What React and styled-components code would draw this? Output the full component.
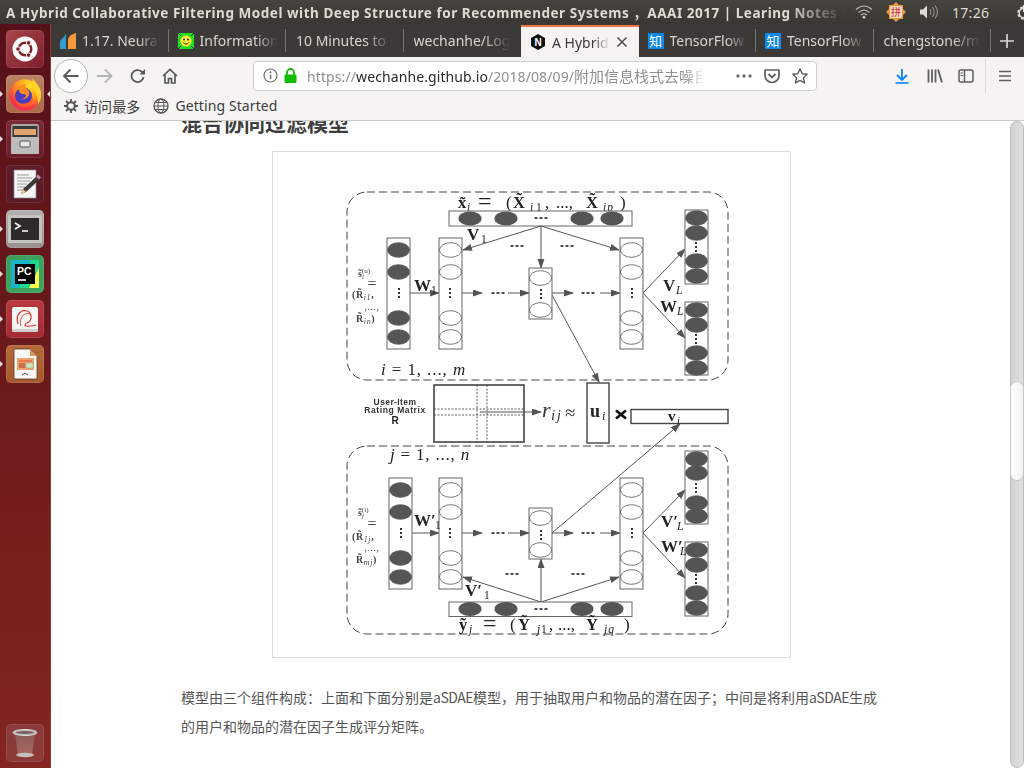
import React from "react";
import styled, { createGlobalStyle } from "styled-components";

const UI_FONT = `"Noto Sans", "Noto Sans CJK SC", sans-serif`;

const GlobalStyle = createGlobalStyle`
  html, body {
    margin: 0;
    padding: 0;
    width: 1024px;
    height: 768px;
    overflow: hidden;
    background: #fff;
  }
`;

const Desktop = styled.div`
  width: 1024px;
  height: 768px;
  display: flex;
  flex-direction: column;
  overflow: hidden;
  font-family: ${UI_FONT};
`;

// top panel
const TopPanel = styled.div`
  height: 24px;
  flex: none;
  display: flex;
  align-items: center;
  background: linear-gradient(#45443f, #393833);
  color: #dfdbd2;
`;
const WindowTitle = styled.div`
  width: 840px;
  flex: none;
  margin-left: 6px;
  font-size: 13.5px;
  font-weight: 700;
  letter-spacing: 0.53px;
  white-space: nowrap;
  overflow: hidden;
  mask-image: linear-gradient(to right, #000 93%, transparent 100%);
`;
const Indicators = styled.div`
  display: flex;
  align-items: center;
  flex: none;
  margin-left: 9px;
  gap: 13px;
`;
const Clock = styled.span`
  font-size: 14px;
  letter-spacing: 0.3px;
  margin: 0 13px 0 1px;
  color: #dfdbd2;
`;

const Body = styled.div`
  flex: 1;
  display: flex;
  min-height: 0;
`;

// launcher
const Launcher = styled.div`
  width: 51px;
  flex: none;
  display: flex;
  flex-direction: column;
  align-items: flex-start;
  gap: 7px;
  padding: 6px 0 6px 6px;
  box-sizing: border-box;
  background: linear-gradient(#57101a, #83261f);
  border-right: 1px solid #8e3a30;
`;
const Tile = styled.div`
  position: relative;
  width: 38px;
  height: 38px;
  border-radius: 5px;
  background: ${(p) => p.$bg};
  box-shadow: inset 0 0 0 1px rgba(255, 255, 255, 0.1);
  display: flex;
  align-items: center;
  justify-content: center;
  ${(p) => p.$trash && "margin-top: auto;"}
`;
const PipLeft = styled.span`
  position: absolute;
  left: -6px;
  top: 16px;
  width: 0;
  height: 0;
  border-left: 3px solid #ddd;
  border-top: 3px solid transparent;
  border-bottom: 3px solid transparent;
`;
const PipRight = styled.span`
  position: absolute;
  right: -6px;
  top: 16px;
  width: 0;
  height: 0;
  border-right: 3px solid #ddd;
  border-top: 3px solid transparent;
  border-bottom: 3px solid transparent;
`;

// browser
const Browser = styled.div`
  flex: 1;
  display: flex;
  flex-direction: column;
  min-width: 0;
`;
const TabStrip = styled.div`
  height: 33px;
  flex: none;
  display: flex;
  background: #3b3a36;
`;
const Tab = styled.div`
  width: 117.5px;
  flex: none;
  box-sizing: border-box;
  display: flex;
  align-items: center;
  gap: 6px;
  padding-left: ${(p) => (p.$noIcon ? "10px" : "9px")};
  position: relative;
  font-size: 14px;
  color: ${(p) => (p.$active ? "#3b3a36" : "#d8d6d0")};
  background: ${(p) => (p.$active ? "#f5f4f3" : "transparent")};
  border-top: ${(p) => (p.$active ? "2px solid #f0764a" : "none")};
  margin-top: ${(p) => (p.$active ? "1px" : "0")};

  &::after {
    content: "";
    display: ${(p) => (p.$sep ? "block" : "none")};
    position: absolute;
    right: 0;
    top: 5px;
    bottom: 5px;
    width: 1px;
    background: #75746f;
  }
`;
const TabLabel = styled.span`
  white-space: nowrap;
  overflow: hidden;
  width: ${(p) => p.$w}px;
  mask-image: linear-gradient(to right, #000 72%, transparent 100%);
`;
const TabClose = styled.span`
  display: flex;
`;
const ZhihuIcon = styled.span`
  width: 16px;
  height: 16px;
  flex: none;
  background: #0f88eb;
  color: #fff;
  font-size: 13px;
  line-height: 16px;
  text-align: center;
  font-family: "Noto Sans CJK SC", sans-serif;
`;
const NewTab = styled.div`
  flex: 1;
  display: flex;
  align-items: center;
  justify-content: center;
  padding-right: 1px;
`;

const NavBar = styled.div`
  height: 37px;
  flex: none;
  display: flex;
  align-items: center;
  background: #f5f4f3;
  position: relative;
`;
const BackButton = styled.div`
  width: 32px;
  height: 32px;
  margin-left: 3px;
  border-radius: 50%;
  background: #fff;
  border: 1px solid #b3b3b1;
  display: flex;
  align-items: center;
  justify-content: center;
  flex: none;
`;
const NavIcon = styled.div`
  display: flex;
  flex: none;
  margin-left: ${(p) => p.$ml}px;
`;
const UrlBar = styled.div`
  width: 564px;
  height: 30px;
  box-sizing: border-box;
  margin-left: 75px;
  flex: none;
  display: flex;
  align-items: center;
  background: #fff;
  border: 1px solid #cfcfcd;
  border-radius: 4px;
  padding-left: 9px;
  font-size: 14px;
  color: #8f8f8d;
`;
const UrlText = styled.div`
  width: 398px;
  margin-left: 10px;
  white-space: nowrap;
  overflow: hidden;
  letter-spacing: 0.1px;
  mask-image: linear-gradient(to right, #000 95%, transparent 100%);

  b {
    font-weight: 400;
    color: #2b2b2b;
  }
`;
const UrlCjk = styled.span`
  font-size: 15px;
  letter-spacing: 0;
`;
const ToolbarSep = styled.div`
  width: 1px;
  height: 34px;
  background: #dcdcda;
  margin-left: 11px;
  flex: none;
`;

const BookmarkBar = styled.div`
  height: 27px;
  flex: none;
  box-sizing: border-box;
  display: flex;
  align-items: center;
  padding: 0 0 3px 13px;
  background: #f5f4f3;
  border-bottom: 1px solid #c9c9c7;
  font-size: 14px;
  letter-spacing: 0.1px;
  color: #3d3d3b;
`;
const Bookmark = styled.div`
  display: flex;
  align-items: center;
  gap: 6px;
  margin-right: 13px;
`;

// page
const Viewport = styled.div`
  flex: 1;
  display: flex;
  min-height: 0;
  overflow: hidden;
  background: #fff;
`;
const Page = styled.div`
  flex: 1;
  min-width: 0;
`;
const Article = styled.article`
  width: 700px;
  margin: -14px 0 0 130px;
  color: #555;
  font-family: "Noto Sans CJK SC", sans-serif;
`;
const Heading = styled.h2`
  margin: 0 0 14px;
  font-size: 21px;
  line-height: 30px;
  font-weight: 700;
  color: #3d3d3d;
`;
const Figure = styled.figure`
  margin: 0 0 0 91px;
  width: 519px;
  height: 507px;
  box-sizing: border-box;
  border: 1px solid #ddd;
  background: #fff;
`;
const Paragraph = styled.p`
  margin: 25px 0 0;
  font-size: 14px;
  line-height: 29px;
  color: #555;
`;
const Latin = styled.span`
  letter-spacing: -0.5px;
`;
const ScrollTrack = styled.div`
  width: 14px;
  flex: none;
  position: relative;
  box-sizing: border-box;
  background: linear-gradient(to right, #d2d2d0, #e0e0de);
  border: 1px solid #bdbdbb;
  border-radius: 7px;
`;
const ScrollThumb = styled.div`
  position: absolute;
  left: 0;
  right: 0;
  top: 260px;
  height: 98px;
  border-radius: 6px;
  background: linear-gradient(to right, #fff, #f1f1ef);
  box-shadow: 0 0 0 1px #c8c8c6;
`;
const DiagramSvg = styled.svg`
  display: block;
  width: 517px;
  height: 505px;
  filter: blur(0.5px);
`;

// -- icons --
const Svg = ({ s = 16, w, h, children }) => (
  <svg width={w || s} height={h || s} viewBox={`0 0 ${w || s} ${h || s}`} fill="none">
    {children}
  </svg>
);

const UbuntuLogo = () => (
  <Svg s={26}>
    <circle cx="13" cy="13" r="12.5" fill="#fff" />
    <circle cx="13" cy="13" r="6.3" stroke="#7d2028" strokeWidth="2.4" />
    <circle cx="6" cy="13" r="2.3" fill="#7d2028" stroke="#fff" />
    <circle cx="16.6" cy="6.9" r="2.3" fill="#7d2028" stroke="#fff" />
    <circle cx="16.6" cy="19.1" r="2.3" fill="#7d2028" stroke="#fff" />
  </Svg>
);

const FirefoxLogo = () => (
  <Svg s={34}>
    <defs>
      <radialGradient id="ffBody" cx="0.65" cy="0.2" r="0.95">
        <stop offset="0" stopColor="#ffe226" />
        <stop offset="0.42" stopColor="#ff9a1f" />
        <stop offset="0.74" stopColor="#f9363f" />
        <stop offset="1" stopColor="#e0267e" />
      </radialGradient>
    </defs>
    <circle cx="17" cy="18" r="15.8" fill="url(#ffBody)" />
    <path d="M24 1c3 4 9 8 9 17 0 4-1 7-3 9 0-7-2-13-6-17 1-3 1-6 0-9z" fill="#ffd426" />
    <circle cx="15.5" cy="19" r="8.5" fill="#4a3bc0" />
    <path d="M9 11c2-3 6-4 9-4-1 2-1 3 1 5 2 1 3 3 2 6-1 3-5 5-8 4 3 0 5-2 5-4 0-1-2-1-4-1-2-1-3-2-3-4z" fill="#ff8a1f" />
    <path d="M7 22c3 5 9 6 14 3 2-1 4-4 4-7 1 6-3 12-9 12-5 0-8-3-9-8z" fill="#ff5a24" />
  </Svg>
);

const FilesIcon = () => (
  <Svg s={32}>
    <rect x="2" y="1" width="28" height="30" rx="2.5" fill="#a9a8a4" />
    <rect x="3.5" y="3" width="25" height="11" fill="#3a3a38" />
    <rect x="5" y="6" width="22" height="6" fill="#e0a56c" />
    <rect x="2" y="14" width="28" height="17" rx="1" fill="#bdbcb8" />
    <rect x="11" y="18" width="10" height="6" rx="1" fill="#e8e8e5" stroke="#555" />
  </Svg>
);

const EditorIcon = () => (
  <Svg s={32}>
    <rect x="5" y="2" width="22" height="28" fill="#f6f6f4" stroke="#8b8b87" strokeWidth="0.7" />
    <path d="M8 7h12M8 10h15M8 13h13M8 16h10M8 19h8M8 22h7" stroke="#9b9b97" />
    <path d="M28 8l3 3-14 13-5 2 2-5z" fill="#3b3b3a" />
    <path d="M27 8.500l2-2 3 3-2 2z" fill="#d384a8" />
    <path d="M12 26l2-5 3 3z" fill="#e8c98f" />
  </Svg>
);

const TerminalIcon = () => (
  <Svg s={34}>
    <rect x="0" y="3" width="34" height="28" rx="1" fill="#c4c3bf" />
    <rect x="3" y="6" width="28" height="22" fill="#2c2b2a" />
    <path d="M7 11l5 3-5 3" stroke="#f2f2f2" strokeWidth="1.6" />
    <path d="M14 19h6" stroke="#f2f2f2" strokeWidth="1.6" />
  </Svg>
);

const PyCharmLogo = () => (
  <Svg s={30}>
    <rect x="1" y="1" width="28" height="28" fill="#21d789" />
    <path d="M1 1h20L9 29H1z" fill="#17b6c9" />
    <path d="M29 29V9L19 29z" fill="#fcf84a" />
    <rect x="5" y="5" width="20" height="20" fill="#000" />
    <path d="M8 21h8" stroke="#fff" strokeWidth="1.6" />
    <text x="7" y="16" fill="#fff" fontSize="10.5" fontWeight="700" fontFamily="Liberation Sans, sans-serif">PC</text>
  </Svg>
);

const PdfIcon = () => (
  <Svg s={30}>
    <rect x="2" y="3" width="26" height="25" rx="2" fill="#f5f5f3" />
    <path d="M8 20C5 10 12 5 17 7c6 2 5 10 0 12-3 1-3 4 3 3 4 0 6-1 6-1" stroke="#d83a32" strokeWidth="1.2" />
    <path d="M11 22C8 13 15 8 20 10" stroke="#d83a32" strokeWidth="0.9" />
    <path d="M2 25h26v1a2 2 0 0 1-2 2H4a2 2 0 0 1-2-2z" fill="#cfcfcc" />
  </Svg>
);

const ImpressIcon = () => (
  <Svg s={32}>
    <path d="M5 1h16l7 7v23H5z" fill="#f7f7f5" stroke="#5b3a26" strokeWidth="0.8" />
    <path d="M21 1l7 7h-7z" fill="#d99562" />
    <rect x="8" y="10" width="17" height="12" fill="#ef9f72" />
    <path d="M10 13h13" stroke="#e2542c" />
    <rect x="10" y="15" width="6" height="5" fill="#c9704a" />
    <rect x="17" y="15" width="7" height="5" fill="#cbe5c5" stroke="#7aa774" strokeWidth="0.5" />
    <path d="M13 27l3-2 3 2" stroke="#555" />
  </Svg>
);

const TrashIcon = () => (
  <Svg s={32}>
    <defs>
      <linearGradient id="binBody" x1="0" x2="0" y1="0" y2="1">
        <stop offset="0" stopColor="#8a5a58" />
        <stop offset="1" stopColor="#a86a66" />
      </linearGradient>
    </defs>
    <path d="M6 6l3 22h14l3-22z" fill="url(#binBody)" />
    <ellipse cx="16" cy="5.5" rx="12" ry="3" fill="#b9b7b4" stroke="#dedcd9" />
    <ellipse cx="16" cy="5.5" rx="9" ry="1.5" fill="#77605e" />
    <ellipse cx="16" cy="28" rx="9" ry="2.2" fill="#c3c1be" />
  </Svg>
);

const Wifi = () => (
  <Svg w={18} h={14}>
    <path d="M1 4.500c5-4.500 11-4.500 16 0M3.500 7.500c3.500-3 7.500-3 11 0M6 10c2-1.600 4-1.600 6 0" stroke="#b9b6ae" strokeWidth="1.2" />
    <circle cx="9" cy="12.300" r="1.300" fill="#dfdbd2" />
  </Svg>
);
const PinyinIcon = () => (
  <Svg s={20}>
    <path d="M10 0l3 3h4v4l3 3-3 3v4h-4l-3 3-3-3H3v-4l-3-3 3-3V3h4z" fill="#e99a45" />
    <rect x="4" y="4" width="12" height="12" rx="2" fill="#f4d9c2" />
    <text x="10" y="14" fontSize="10" textAnchor="middle" fill="#c92a2a" fontFamily="Noto Sans CJK SC, sans-serif">拼</text>
  </Svg>
);
const Volume = () => (
  <Svg w={19} h={16}>
    <path d="M1 5.500h3l4-4v13l-4-4H1z" fill="#dfdbd2" />
    <path d="M11 5c1 2 1 4 0 6M13.500 3c2 3 2 7 0 10M16 1.500c3 4 3 9 0 13" stroke="#8f8c85" strokeWidth="1.2" />
  </Svg>
);
const Power = () => (
  <Svg s={18}>
    <circle cx="9" cy="10" r="5.600" stroke="#dfdbd2" strokeWidth="2.400" strokeDasharray="2.600 1.800" />
    <circle cx="9" cy="10" r="4.800" stroke="#dfdbd2" strokeWidth="1.400" />
    <path d="M9 2v7" stroke="#dfdbd2" strokeWidth="2" />
  </Svg>
);

const SklearnIcon = () => (
  <Svg s={16}>
    <path d="M0 8c3-4 5-4 6-8v16H0z" fill="#3499cd" />
    <path d="M8 16V6c1-3 4-5 8-6v16z" fill="#f89939" />
  </Svg>
);
const SmileyIcon = () => (
  <Svg s={16}>
    <rect width="16" height="16" fill="#1fe01f" />
    <circle cx="8" cy="8" r="5.500" fill="#ffe93b" />
    <circle cx="6" cy="6.500" r="1" fill="#222" />
    <circle cx="10" cy="6.500" r="1" fill="#222" />
    <path d="M5 9.500c1.500 2 4.500 2 6 0" stroke="#222" />
    <path d="M0 0l3 3M16 0l-3 3M0 16l3-3M16 16l-3-3" stroke="#222" />
  </Svg>
);
const NextIcon = () => (
  <Svg s={16}>
    <path d="M8 0l7 4v8l-7 4-7-4V4z" fill="#111" />
    <text x="8" y="11.500" fill="#fff" fontSize="10" fontWeight="700" textAnchor="middle" fontFamily="Liberation Sans, sans-serif">N</text>
  </Svg>
);
const CloseX = () => (
  <Svg s={12}>
    <path d="M1.500 1.500l9 9M10.500 1.500l-9 9" stroke="#4a4a48" strokeWidth="1.500" />
  </Svg>
);
const Plus = () => (
  <Svg s={14}>
    <path d="M7 0v14M0 7h14" stroke="#d8d6d0" strokeWidth="1.700" />
  </Svg>
);

const ArrowLeft = ({ c = "#5a5a58" }) => (
  <Svg s={18}>
    <path d="M16.500 9H2M8.500 2.500L2 9l6.500 6.500" stroke={c} strokeWidth="1.900" />
  </Svg>
);
const ArrowRight = () => (
  <Svg s={18}>
    <path d="M1 9h14.500M9 2.500L15.500 9 9 15.500" stroke="#b4b4b2" strokeWidth="1.800" />
  </Svg>
);
const Reload = () => (
  <Svg s={16}>
    <path d="M13.500 9a6 6 0 1 1-2-5.500L14 5.500" stroke="#5a5a58" strokeWidth="1.800" />
    <path d="M15 1v5.500H9.500z" fill="#5a5a58" />
  </Svg>
);
const HomeIcon = () => (
  <Svg s={16}>
    <path d="M1 8l7-6.500L15 8M3 6.500V15h3.500v-4.500h3V15H13V6.500" stroke="#5a5a58" strokeWidth="1.700" />
  </Svg>
);
const InfoIcon = () => (
  <Svg s={15}>
    <circle cx="7.500" cy="7.500" r="6.500" stroke="#6f6f6d" strokeWidth="1.200" />
    <path d="M7.500 6.500v4.500" stroke="#6f6f6d" strokeWidth="1.500" />
    <circle cx="7.500" cy="4.200" r="1" fill="#6f6f6d" />
  </Svg>
);
const LockIcon = () => (
  <Svg w={13} h={15}>
    <path d="M3 7V4.500a3.500 3.500 0 0 1 7 0V7" stroke="#12bc00" strokeWidth="1.800" />
    <rect x="0.500" y="6.500" width="12" height="8.500" rx="1" fill="#12bc00" />
  </Svg>
);
const PageDots = () => (
  <Svg w={16} h={4}>
    <circle cx="2" cy="2" r="1.700" fill="#6a6a68" />
    <circle cx="8" cy="2" r="1.700" fill="#6a6a68" />
    <circle cx="14" cy="2" r="1.700" fill="#6a6a68" />
  </Svg>
);
const Pocket = () => (
  <Svg s={16}>
    <path d="M1 2h14v5.500a7 7 0 0 1-14 0V2z" stroke="#5f5f5d" strokeWidth="1.700" strokeLinejoin="round" />
    <path d="M4.500 6l3.500 3.500L11.500 6" stroke="#5f5f5d" strokeWidth="1.800" />
  </Svg>
);
const StarIcon = () => (
  <Svg s={16}>
    <path d="M8 1l2.200 4.700 5 .6-3.700 3.500 1 5.100L8 12.400 3.500 14.900l1-5.100L.8 6.300l5-.6z" stroke="#5f5f5d" strokeWidth="1.500" strokeLinejoin="round" />
  </Svg>
);
const DownloadIcon = () => (
  <Svg s={16}>
    <path d="M8 1v10M3 7l5 5 5-5" stroke="#0a84ff" strokeWidth="1.800" />
    <path d="M1.500 15h13" stroke="#0a84ff" strokeWidth="1.600" />
  </Svg>
);
const LibraryIcon = () => (
  <Svg s={16}>
    <path d="M1.500 1.500v13M5 1.500v13M8.500 1.500v13M11 1.500l4 13" stroke="#5f5f5d" strokeWidth="1.800" />
  </Svg>
);
const SidebarIcon = () => (
  <Svg s={16}>
    <rect x="1" y="2" width="14" height="12" rx="2" stroke="#5f5f5d" strokeWidth="1.500" />
    <path d="M6.500 2v12" stroke="#5f5f5d" strokeWidth="1.500" />
    <path d="M2.500 5h2.500M2.500 7.500h2.500" stroke="#5f5f5d" />
  </Svg>
);
const MenuIcon = () => (
  <Svg s={14}>
    <path d="M1 2.500h12M1 7h12M1 11.500h12" stroke="#5f5f5d" strokeWidth="1.600" />
  </Svg>
);
const GearIcon = () => (
  <Svg s={14}>
    <circle cx="7" cy="7" r="3.800" stroke="#555" strokeWidth="2" />
    <path d="M7 0v3M7 11v3M0 7h3M11 7h3M2 2l2 2M10 10l2 2M12 2l-2 2M4 10l-2 2" stroke="#555" strokeWidth="1.800" />
  </Svg>
);
const GlobeIcon = () => (
  <Svg s={16}>
    <circle cx="8" cy="8" r="7" stroke="#555" strokeWidth="1.300" />
    <ellipse cx="8" cy="8" rx="3" ry="7" stroke="#555" />
    <path d="M1 8h14M2 4.500h12M2 11.500h12" stroke="#555" />
  </Svg>
);

// -- the figure, drawn in page coordinates --
const INK = "#555";
const SERIF = `"Liberation Serif", serif`;
const SANS = `"Liberation Sans", sans-serif`;

const Col = ({ x, y, h, cys, filled }) => (
  <g>
    <rect x={x} y={y} width="23" height={h} fill="#fff" stroke="#666" strokeWidth="1" />
    {cys.map((cy) => (
      <ellipse
        key={cy}
        cx={x + 11.5}
        cy={cy}
        rx="11"
        ry="7.300"
        fill={filled ? INK : "#fff"}
        stroke={filled ? INK : "#555"}
        strokeWidth="0.800"
      />
    ))}
  </g>
);
const VDots = ({ x, y }) => (
  <path d={`M${x} ${y - 5}v2M${x} ${y - 1}v2M${x} ${y + 3}v2`} stroke="#112" strokeWidth="1.700" />
);
const HDots = ({ x, y }) => (
  <path d={`M${x - 6.5} ${y}h3M${x - 1.500} ${y}h3M${x + 3.500} ${y}h3`} stroke="#112" strokeWidth="1.700" />
);
const Line = ({ d }) => <path d={d} stroke={INK} strokeWidth="1" fill="none" markerEnd="url(#arr)" />;
const BarEllipses = ({ cy }) =>
  [470, 506, 582, 612].map((cx) => <ellipse key={cx} cx={cx} cy={cy} rx="11.500" ry="7" fill={INK} />);

const Tex = ({ x, y, size = 15, bold, italic, anchor, children, fill = "#222", family = SERIF, spacing }) => (
  <text
    x={x}
    y={y}
    fontSize={size}
    fontFamily={family}
    fontWeight={bold ? 700 : 400}
    fontStyle={italic ? "italic" : "normal"}
    textAnchor={anchor}
    fill={fill}
    letterSpacing={spacing}
  >
    {children}
  </text>
);

// symbol with a subscript placed by hand, the way the figure sets it
const Sym = ({ x, y, name, sub, subX, subItalic = true, size = 17 }) => (
  <g>
    <Tex x={x} y={y} size={size} bold>{name}</Tex>
    <Tex x={subX} y={y + 3} size={size * 0.68} italic={subItalic}>{sub}</Tex>
  </g>
);

const Equation = ({ y, parts }) =>
  parts.map(([x, text, kind], i) => {
    if (kind === "b") return <Tex key={i} x={x} y={y} size={16.5} bold>{text}</Tex>;
    if (kind === "s") return <Tex key={i} x={x} y={y + 3} size={11.5} italic spacing={1}>{text}</Tex>;
    if (kind === "n") return <Tex key={i} x={x} y={y + 3} size={11.5}>{text}</Tex>;
    if (kind === "e") return <Tex key={i} x={x} y={y + 1} size={24}>{text}</Tex>;
    return <Tex key={i} x={x} y={y} size={17}>{text}</Tex>;
  });

const SideLabel = ({ ys, top, sup, first, last }) => (
  <g fill="#333">
    <Tex x={358} y={ys[0]} size={10} bold fill="#444">
      s̃
      <tspan dy="2" fontSize="7" fontStyle="italic" fontWeight="400">{top}</tspan>
      <tspan dy="-6" dx="-2" fontSize="7" fontWeight="400">{sup}</tspan>
    </Tex>
    <Tex x={372} y={ys[1]} size={16} anchor="middle" fill="#444">=</Tex>
    <Tex x={352} y={ys[2]} size={10} bold fill="#444" spacing={0.6}>
      (R̃
      <tspan dy="2" fontSize="8" fontStyle="italic" fontWeight="400">{first}</tspan>
      <tspan dy="-2">,</tspan>
    </Tex>
    <Tex x={372} y={ys[3]} size={10} anchor="middle" fill="#444" spacing={0.5}>,...,</Tex>
    <Tex x={356} y={ys[4]} size={10} bold fill="#444" spacing={0.6}>
      R̃
      <tspan dy="2" fontSize="8" fontStyle="italic" fontWeight="400">{last}</tspan>
      <tspan dy="-2">)</tspan>
    </Tex>
  </g>
);

const Diagram = () => (
  <DiagramSvg viewBox="273 152 517 505">
    <defs>
      <marker id="arr" markerWidth="10" markerHeight="8" refX="9" refY="3.500" orient="auto" markerUnits="userSpaceOnUse">
        <path d="M0 0L10 3.500L0 7z" fill={INK} />
      </marker>
    </defs>

    {/* upper network */}
    <rect x="347" y="192" width="381" height="188" rx="20" fill="none" stroke="#444" strokeWidth="1" strokeDasharray="8 4" />
    <Equation
      y={208}
      parts={[
        [458, "x̃", "b"], [467, "i", "s"], [478, "=", "e"], [506, "("], [513, "X̃", "b"],
        [530, "i", "s"], [536, "1", "n"], [545, ","], [556, "...,"], [586, "X̃", "b"], [603, "ip", "s"], [620, ")"],
      ]}
    />
    <rect x="449" y="211" width="183" height="15" fill="#fff" stroke="#666" />
    <BarEllipses cy={218.500} />
    <HDots x={541} y={218} />

    <Line d="M541 226L463 250" />
    <Line d="M541 226V268" />
    <Line d="M541 226L619 250" />
    <Line d="M410 293H439" />
    <Line d="M461 293H482" />
    <Line d="M508 293H529" />
    <Line d="M552 293H573" />
    <Line d="M600 293H620" />
    <Line d="M643 293L685 249" />
    <Line d="M643 293L685 338" />
    <Line d="M552 295L599 382" />

    <Col x={387} y={238} h={111} cys={[250, 272, 318, 337]} filled />
    <Col x={439} y={238} h={111} cys={[250, 272, 318, 337]} />
    <Col x={529} y={268} h={51} cys={[278, 310]} />
    <Col x={620} y={238} h={111} cys={[250, 272, 318, 337]} />
    <Col x={685} y={210} h={74} cys={[218, 233, 261, 276]} filled />
    <Col x={685} y={302} h={73} cys={[310, 325, 353, 368]} filled />
    <VDots x={399} y={293} />
    <VDots x={450} y={293} />
    <VDots x={541} y={294} />
    <VDots x={632} y={293} />
    <VDots x={696} y={247} />
    <VDots x={696} y={339} />
    <HDots x={498} y={293} />
    <HDots x={588} y={293} />
    <HDots x={517} y={246} />
    <HDots x={567} y={246} />

    <Sym x={467} y={240} name="V" sub="1" subX={481} subItalic={false} />
    <Sym x={414} y={291} name="W" sub="1" subX={431} subItalic={false} />
    <Sym x={663} y={291} name="V" sub="L" subX={676} />
    <Sym x={660} y={312} name="W" sub="L" subX={677} />
    <SideLabel ys={[277, 289, 298, 310, 322]} top="i" sup="(u)" first="i1" last="in" />
    <Tex x={381} y={375} size={17} italic spacing={0.9}>i<tspan fontStyle="normal"> = 1, ..., </tspan>m</Tex>

    {/* rating matrix */}
    <Tex x={395} y={405} size={8.500} bold anchor="middle" fill="#333" family={SANS} spacing={0.4}>User-Item</Tex>
    <Tex x={395} y={413} size={8.500} bold anchor="middle" fill="#333" family={SANS} spacing={0.6}>Rating Matrix</Tex>
    <Tex x={395} y={424} size={10} bold anchor="middle" family={SANS}>R</Tex>
    <rect x="434" y="385" width="90" height="57" fill="#fff" stroke="#444" strokeWidth="1.600" />
    <path d="M477 385v57M487 385v57M434 409h90M434 415h90" stroke="#333" strokeWidth="0.800" strokeDasharray="2 1.500" />
    <Line d="M480 412H541" />
    <Tex x={542} y={417} size={22} italic fill="#333">r</Tex>
    <Tex x={551} y={420} size={15} italic fill="#333" spacing={1.500}>ij</Tex>
    <Tex x={565} y={419} size={19} fill="#333">≈</Tex>
    <rect x="587" y="383" width="22" height="60" fill="#fff" stroke="#444" strokeWidth="1.400" />
    <Sym x={590} y={417} name="u" sub="i" subX={602} size={18} />
    <path d="M616 410.500l10 8M626 410.500l-10 8" stroke="#111" strokeWidth="2.800" />
    <rect x="631" y="409.500" width="97" height="14" fill="#fff" stroke="#444" strokeWidth="1.400" />
    <Sym x={668} y={421} name="v" sub="j" subX={677} size={15} />

    {/* lower network */}
    <rect x="347" y="446" width="381" height="188" rx="20" fill="none" stroke="#444" strokeWidth="1" strokeDasharray="8 4" />
    <Tex x={390} y={460} size={17} italic spacing={0.8}>j<tspan fontStyle="normal"> = 1, ..., </tspan>n</Tex>

    <Line d="M541 602L463 577" />
    <Line d="M541 602V559" />
    <Line d="M541 602L619 577" />
    <Line d="M412 533H439" />
    <Line d="M461 533H482" />
    <Line d="M508 533H529" />
    <Line d="M552 533H573" />
    <Line d="M600 533H620" />
    <Line d="M643 533L685 490" />
    <Line d="M643 533L685 578" />
    <Line d="M552 533L680 424" />

    <Col x={389} y={478} h={111} cys={[490, 512, 558, 577]} filled />
    <Col x={439} y={478} h={111} cys={[490, 512, 558, 577]} />
    <Col x={529} y={508} h={51} cys={[518, 550]} />
    <Col x={620} y={478} h={111} cys={[490, 512, 558, 577]} />
    <Col x={685} y={451} h={73} cys={[459, 473, 503, 516]} filled />
    <Col x={685} y={542} h={74} cys={[550, 565, 593, 608]} filled />
    <VDots x={401} y={533} />
    <VDots x={450} y={533} />
    <VDots x={541} y={535} />
    <VDots x={632} y={533} />
    <VDots x={696} y={488} />
    <VDots x={696} y={579} />
    <HDots x={498} y={533} />
    <HDots x={588} y={533} />
    <HDots x={512} y={574} />
    <HDots x={578} y={574} />

    <rect x="449" y="602" width="183" height="14.500" fill="#fff" stroke="#666" />
    <BarEllipses cy={609} />
    <HDots x={541} y={609} />
    <Equation
      y={630}
      parts={[
        [459, "ỹ", "b"], [469, "j", "s"], [483, "=", "e"], [510, "("], [518, "Ỹ", "b"],
        [537, "j", "s"], [541, "1", "n"], [549, ","], [558, "...,"], [586, "Ỹ", "b"], [604, "jq", "s"], [624, ")"],
      ]}
    />

    <Sym x={465} y={596} name="V′" sub="1" subX={484} subItalic={false} />
    <Sym x={414} y={526} name="W′" sub="1" subX={435} subItalic={false} />
    <Sym x={661} y={527} name="V′" sub="L" subX={677} />
    <Sym x={661} y={552} name="W′" sub="L" subX={680} />
    <SideLabel ys={[516, 529, 540, 551, 563]} top="j" sup="(i)" first="1j" last="mj" />
  </DiagramSvg>
);

const launcherItems = [
  { bg: "linear-gradient(135deg,#a8454c,#7e1f2c)", icon: <UbuntuLogo /> },
  { bg: "linear-gradient(#b98264,#ad6a49)", icon: <FirefoxLogo />, left: true, right: true },
  { bg: "linear-gradient(#7d2a36,#6c1d2a)", icon: <FilesIcon />, left: true },
  { bg: "linear-gradient(#5f1c28,#5a1a26)", icon: <EditorIcon /> },
  { bg: "linear-gradient(#b0b0ae,#98918e)", icon: <TerminalIcon />, left: true },
  { bg: "linear-gradient(#3f9e5e,#3ea35f)", icon: <PyCharmLogo />, left: true },
  { bg: "linear-gradient(#b93a40,#a52a34)", icon: <PdfIcon />, left: true },
  { bg: "linear-gradient(#b66a3a,#a55a2e)", icon: <ImpressIcon />, left: true },
];

export default function App() {
  return (
    <Desktop>
      <GlobalStyle />
      <TopPanel>
        <WindowTitle>A Hybrid Collaborative Filtering Model with Deep Structure for Recommender Systems ，AAAI 2017 | Learing Notes -</WindowTitle>
        <Indicators>
          <Wifi />
          <PinyinIcon />
          <Volume />
          <Clock>17:26</Clock>
          <Power />
        </Indicators>
      </TopPanel>

      <Body>
        <Launcher>
          {launcherItems.map((item, i) => (
            <Tile key={i} $bg={item.bg}>
              {item.left && <PipLeft />}
              {item.icon}
              {item.right && <PipRight />}
            </Tile>
          ))}
          <Tile $trash $bg="linear-gradient(#8a3a3c,#8c3a36)">
            <TrashIcon />
          </Tile>
        </Launcher>

        <Browser>
          <TabStrip>
            <Tab $sep><SklearnIcon /><TabLabel $w={78}>1.17. Neural</TabLabel></Tab>
            <Tab $sep><SmileyIcon /><TabLabel $w={78}>Information</TabLabel></Tab>
            <Tab $sep $noIcon><TabLabel $w={96}>10 Minutes to p</TabLabel></Tab>
            <Tab $noIcon><TabLabel $w={96}>wechanhe/Log</TabLabel></Tab>
            <Tab $active>
              <NextIcon />
              <TabLabel $w={58}>A Hybrid</TabLabel>
              <TabClose><CloseX /></TabClose>
            </Tab>
            <Tab $sep><ZhihuIcon>知</ZhihuIcon><TabLabel $w={78}>TensorFlow</TabLabel></Tab>
            <Tab $sep><ZhihuIcon>知</ZhihuIcon><TabLabel $w={78}>TensorFlow</TabLabel></Tab>
            <Tab $sep $noIcon><TabLabel $w={96}>chengstone/m</TabLabel></Tab>
            <NewTab><Plus /></NewTab>
          </TabStrip>

          <NavBar>
            <BackButton><ArrowLeft /></BackButton>
            <NavIcon $ml={8}><ArrowRight /></NavIcon>
            <NavIcon $ml={16}><Reload /></NavIcon>
            <NavIcon $ml={16}><HomeIcon /></NavIcon>
            <UrlBar>
              <InfoIcon />
              <NavIcon $ml={6}><LockIcon /></NavIcon>
              <UrlText>https://<b>wechanhe.github.io</b>/2018/08/09/<UrlCjk>附加信息栈式去噪自编码器</UrlCjk></UrlText>
              <NavIcon $ml={31}><PageDots /></NavIcon>
              <NavIcon $ml={12}><Pocket /></NavIcon>
              <NavIcon $ml={12}><StarIcon /></NavIcon>
            </UrlBar>
            <NavIcon $ml={77}><DownloadIcon /></NavIcon>
            <NavIcon $ml={17}><LibraryIcon /></NavIcon>
            <NavIcon $ml={15}><SidebarIcon /></NavIcon>
            <ToolbarSep />
            <NavIcon $ml={12}><MenuIcon /></NavIcon>
          </NavBar>

          <BookmarkBar>
            <Bookmark><GearIcon />访问最多</Bookmark>
            <Bookmark><GlobeIcon />Getting Started</Bookmark>
          </BookmarkBar>

          <Viewport>
            <Page>
              <Article>
                <Heading>混合协同过滤模型</Heading>
                <Figure><Diagram /></Figure>
                <Paragraph>
                  模型由三个组件构成：上面和下面分别是<Latin>aSDAE</Latin>模型，用于抽取用户和物品的潜在因子；中间是将利用<Latin>aSDAE</Latin>生成的用户和物品的潜在因子生成评分矩阵。
                </Paragraph>
              </Article>
            </Page>
            <ScrollTrack><ScrollThumb /></ScrollTrack>
          </Viewport>
        </Browser>
      </Body>
    </Desktop>
  );
}
